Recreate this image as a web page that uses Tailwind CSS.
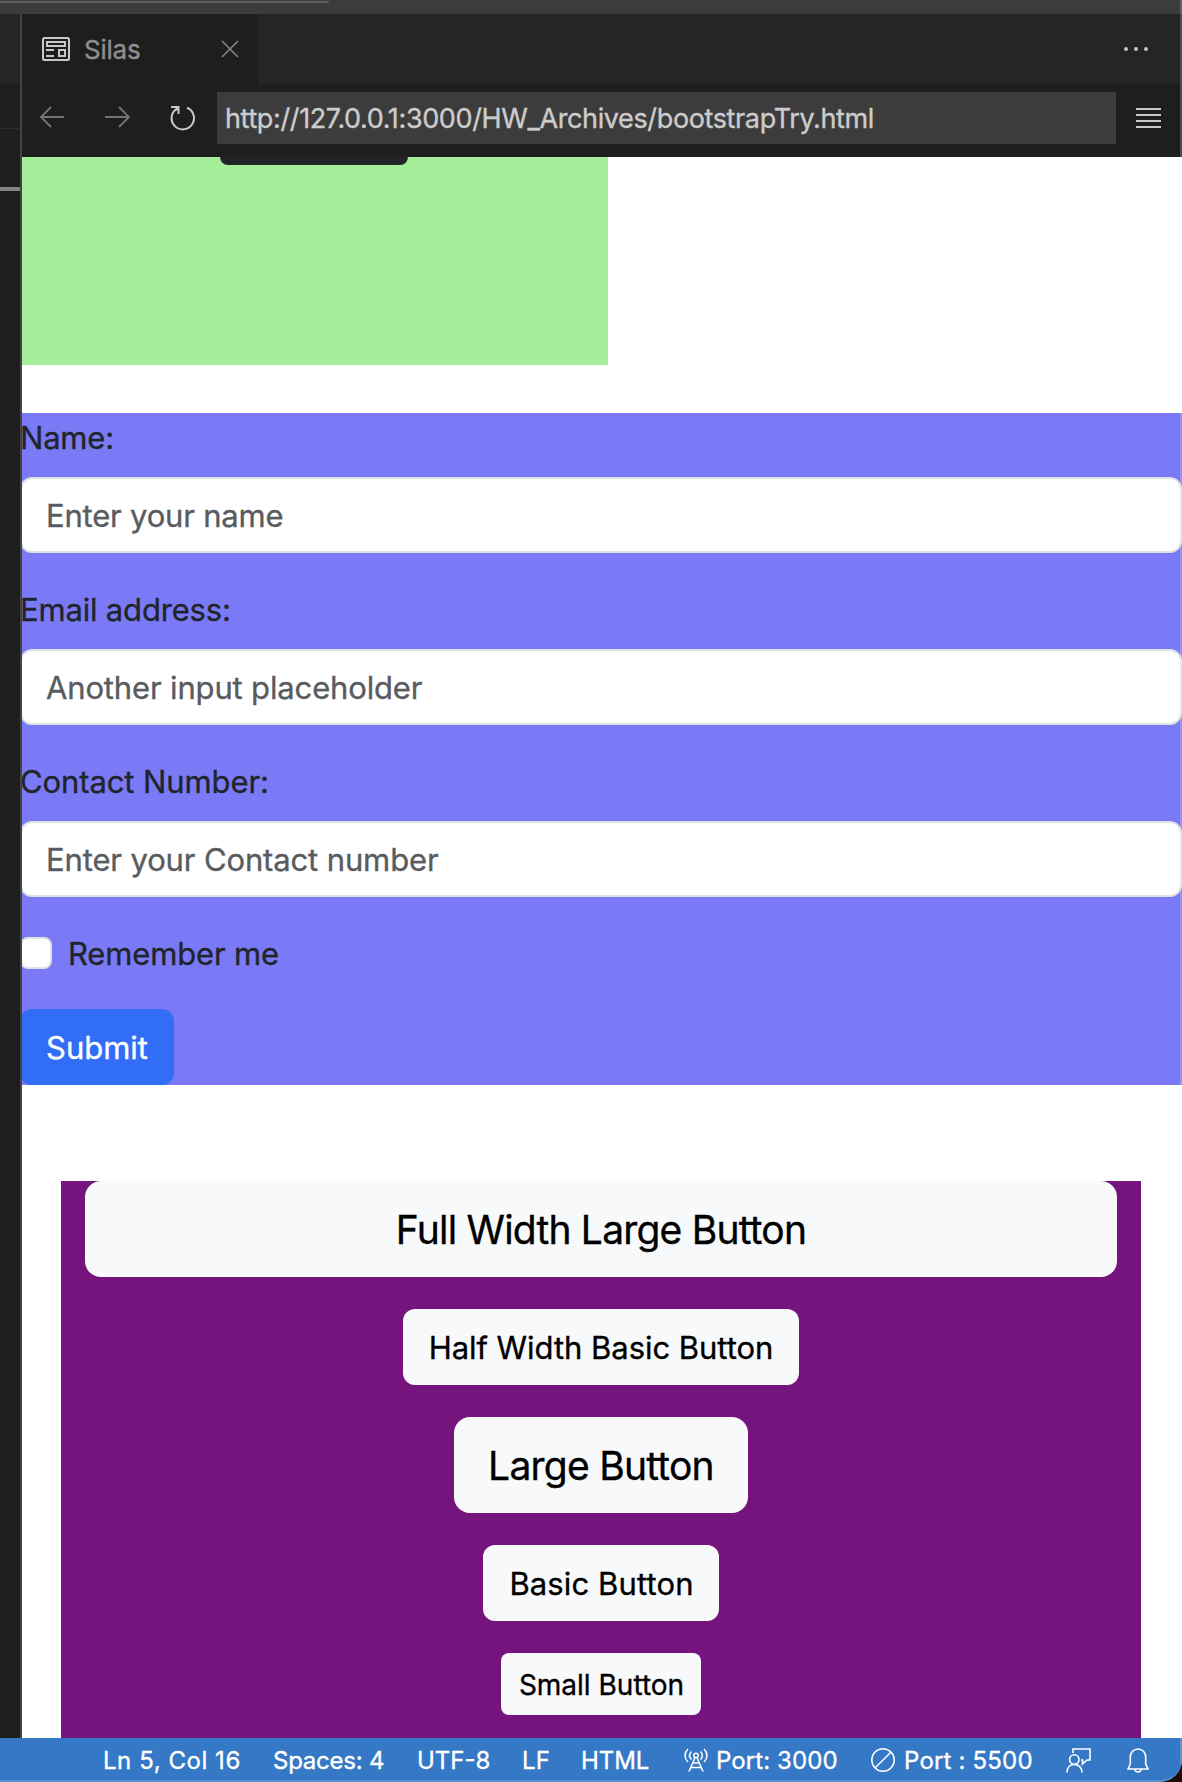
<!DOCTYPE html>
<html lang="en">
<head>
<meta charset="utf-8">
<title>Silas</title>
<script src="https://cdn.jsdelivr.net/npm/@tailwindcss/browser@4"></script>
</head>
<body class="relative flex h-[1782px] w-[1182px] flex-col overflow-hidden bg-[#1e1e1e] font-[Inter,sans-serif] [-webkit-text-stroke:0.35px]">
  <!-- title bar -->
  <div class="h-[14px] shrink-0 bg-[#3c3c3c]">
    <div class="h-[3px] w-[329px] rounded-br-[6px] border-b-2 border-[#616161]"></div>
  </div>

  <div class="flex h-[1724px] shrink-0">
    <!-- neighbouring editor group -->
    <div class="w-[20px] shrink-0 bg-[#1e1e1e]">
      <div class="h-[70px] bg-[#252526]"></div>
      <div class="h-[45px] border-b border-[#2d2d2d]"></div>
      <div class="mt-[58px] h-[4px] bg-[#848484]"></div>
    </div>

    <main class="relative flex w-[1162px] flex-col bg-white">
      <!-- tabs -->
      <div class="flex h-[70px] shrink-0 items-center justify-between bg-[#252526] pr-[32px]">
        <div class="flex h-full w-[238px] items-center bg-[#1e1e1e] pl-[22px]">
          <svg class="h-[24px] w-[28px] shrink-0" viewBox="0 0 28 24" fill="none" stroke="#c8c8c8" stroke-width="2"><rect x="1" y="1" width="26" height="22" rx="1.5"/><path d="M5 5h18v4H5zM4 13h8M4 19h8M17 13h6v6h-6z"/></svg>
          <span class="ml-[14px] w-[137px] pt-[2px] text-[26px] leading-[32px] tracking-[-0.22px] text-[#8f8f8f]">Silas</span>
          <svg class="h-[18px] w-[18px] shrink-0" viewBox="0 0 18 18" fill="none" stroke="#858585" stroke-width="1.6"><path d="M1 1l16 16M17 1L1 17"/></svg>
        </div>
        <svg class="h-[6px] w-[28px]" viewBox="0 0 28 6" fill="#c5c5c5"><circle cx="4" cy="3" r="2"/><circle cx="14" cy="3" r="2"/><circle cx="24" cy="3" r="2"/></svg>
      </div>

      <!-- address bar -->
      <div class="flex h-[73px] shrink-0 items-start bg-[#1e1e1e] pt-[8px]">
        <svg class="mt-[14px] ml-[19px] h-[24px] w-[26px]" viewBox="0 0 26 24" fill="none" stroke="#747474" stroke-width="1.8"><path d="M25 11H2M12 1L2 11l10 10"/></svg>
        <svg class="mt-[14px] ml-[40px] h-[24px] w-[26px]" viewBox="0 0 26 24" fill="none" stroke="#747474" stroke-width="1.8"><path d="M0 11h24M14 1l10 10-10 10"/></svg>
        <svg class="mt-[12px] ml-[39px] h-[28px] w-[26px]" viewBox="0 0 26 28" fill="none" stroke="#c8c8c8" stroke-width="2"><path d="M1 3h7.500v7M8.500 3.500l-3 2.800M17 3.800A11.200 11.200 0 1 1 7 4.600"/></svg>
        <div class="ml-[21px] h-[52px] w-[899px] bg-[#3c3c3c] pt-px pl-[8px] text-[27px] leading-[52px] tracking-[-0.37px] text-[#cccccc]">http://127.0.0.1:3000/HW_Archives/bootstrapTry.html</div>
        <svg class="mt-[16px] ml-[20px] h-[20px] w-[25px]" viewBox="0 0 25 20" fill="none" stroke="#c8c8c8" stroke-width="2"><path d="M0 1h25M0 7h25M0 13h25M0 19h25"/></svg>
      </div>

      <!-- card, scrolled partly out of view -->
      <section class="h-[208px] w-[588px] shrink-0 bg-[#a6ed99]">
        <div class="ml-[200px] h-[8px] w-[188px] rounded-b-[12px] bg-[#212529]"></div>
      </section>

      <!-- contact form -->
      <form class="mt-[48px] h-[672px] shrink-0 bg-[#7a79f6] text-[31px] leading-[48px] text-[#212529]">
        <label class="block h-[48px] pt-px tracking-[-0.2px]">Name:</label>
        <div class="mt-[16px] h-[76px] rounded-[12px] border-2 border-[#dee2e6] bg-white pt-[13px] pl-[24px] tracking-[-0.2px] text-[#595c5f]">Enter your name</div>
        <label class="mt-[32px] block h-[48px] pt-px tracking-[-0.18px]">Email address:</label>
        <div class="mt-[16px] h-[76px] rounded-[12px] border-2 border-[#dee2e6] bg-white pt-[13px] pl-[24px] tracking-[-0.15px] text-[#595c5f]">Another input placeholder</div>
        <label class="mt-[32px] block h-[48px] pt-px tracking-[-0.1px]">Contact Number:</label>
        <div class="mt-[16px] h-[76px] rounded-[12px] border-2 border-[#dee2e6] bg-white pt-[13px] pl-[24px] tracking-[-0.13px] text-[#595c5f]">Enter your Contact number</div>
        <div class="mt-[32px] flex h-[48px] items-center">
          <div class="h-[32px] w-[32px] rounded-[8px] border-2 border-[#dee2e6] bg-white"></div>
          <label class="ml-[16px] pt-px tracking-[-0.16px]">Remember me</label>
        </div>
        <button type="button" class="mt-[32px] block h-[76px] w-[154px] rounded-[12px] bg-[#316df6] pt-px pl-[26px] text-left text-white">Submit</button>
      </form>

      <!-- button stack -->
      <section class="mt-[96px] ml-[41px] flex h-[557px] w-[1080px] shrink-0 flex-col items-center gap-[32px] bg-[#75147c] text-[31px] text-black">
        <button type="button" class="h-[96px] w-[1032px] shrink-0 rounded-[16px] bg-[#f8f9fb] pt-[3px] text-[39px] tracking-[-0.79px]">Full Width Large Button</button>
        <button type="button" class="h-[76px] w-[396px] shrink-0 rounded-[12px] bg-[#f8f9fb] pt-[3px] tracking-[-0.04px]">Half Width Basic Button</button>
        <button type="button" class="h-[96px] w-[294px] shrink-0 rounded-[16px] bg-[#f8f9fb] pt-[3px] text-[39px] tracking-[-0.75px]">Large Button</button>
        <button type="button" class="h-[76px] w-[236px] shrink-0 rounded-[12px] bg-[#f8f9fb] pt-[3px] pl-px tracking-[0.12px]">Basic Button</button>
        <button type="button" class="h-[62px] w-[200px] shrink-0 rounded-[8px] bg-[#f8f9fb] pt-[2px] pl-px text-[28px]">Small Button</button>
      </section>
      <!-- group divider over the page's left edge -->
      <div class="absolute inset-y-0 left-0 w-[2px] bg-[#444444]"></div>
    </main>
  </div>

  <!-- status bar -->
  <div class="h-[44px] shrink-0 bg-[#1f0a0a]">
    <footer class="flex h-[44px] items-center rounded-br-[22px] border-b-2 border-[#5a91d2] bg-[#3478c6] pt-[2px] pl-[103px] text-[24px] leading-[42px] whitespace-nowrap text-white">
      <span class="w-[170px] shrink-0 pt-[2px] tracking-[0.55px]">Ln 5, Col 16</span>
      <span class="w-[144px] shrink-0 pt-[2px] tracking-[-0.23px]">Spaces: 4</span>
      <span class="w-[105px] shrink-0 pt-[2px]">UTF-8</span>
      <span class="w-[59px] shrink-0 pt-[2px] tracking-[0.2px]">LF</span>
      <span class="w-[103px] shrink-0 pt-[2px] tracking-[-0.1px]">HTML</span>
      <svg class="mr-[8px] h-[24px] w-[24px] shrink-0" viewBox="0 0 24 24" fill="none" stroke="#fff" stroke-width="1.5"><path d="M4 1C0 5 0 10 4 14M7.500 3.500C5 6 5 9 7.500 11.500M20 1c4 4 4 9 0 13M16.500 3.500C19 6 19 9 16.500 11.500M11 9.500L5 23.500M13 9.500l6 14M8.700 15h6.600M6.800 19.500h10.400"/><circle cx="12" cy="7.500" r="2.200"/></svg>
      <span class="w-[155px] shrink-0 pt-[2px] tracking-[0.1px]">Port: 3000</span>
      <svg class="mr-[9px] h-[24px] w-[24px] shrink-0" viewBox="0 0 24 24" fill="none" stroke="#fff" stroke-width="1.5"><circle cx="12" cy="12" r="11.200"/><path d="M4.200 19.800L19.800 4.200"/></svg>
      <span class="w-[162px] shrink-0 pt-[2px] tracking-[0.18px]">Port : 5500</span>
      <svg class="mr-[36px] h-[25px] w-[25px] shrink-0" viewBox="0 0 25 25" fill="none" stroke="#fff" stroke-width="1.6"><path d="M7 5V1h17v11h-3l-4.500 4v-4H15"/><circle cx="8.300" cy="11.500" r="4.700"/><path d="M1 24.500c0-5 3-8 7.300-8s7.700 3 7.700 8"/></svg>
      <svg class="h-[25px] w-[22px] shrink-0" viewBox="0 0 22 25" fill="none" stroke="#fff" stroke-width="1.6"><path d="M1 21l2.300-5V9c0-4.500 3.300-8 7.700-8s7.700 3.500 7.700 8v7l2.300 5zM8 21c0 4 6 4 6 0"/></svg>
    </footer>
  </div>

  <!-- window edge highlight -->
  <div class="absolute top-0 right-0 h-[1765px] w-[2px] bg-white/20"></div>
</body>
</html>
